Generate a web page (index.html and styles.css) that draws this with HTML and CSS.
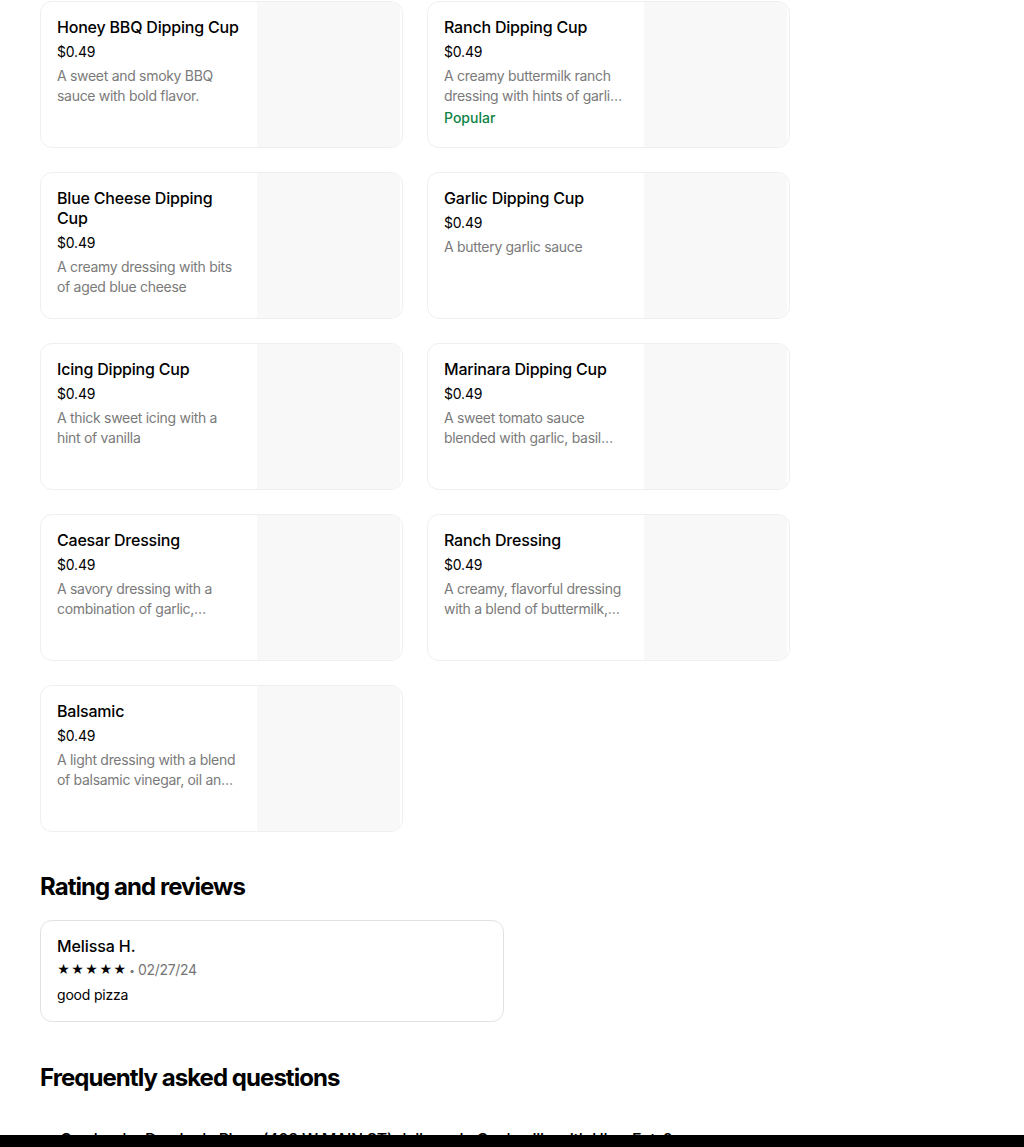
FILE: index.html
```html
<!DOCTYPE html>
<html>
<head>
<meta charset="utf-8">
<link rel="stylesheet" href="styles.css">
</head>
<body>
<main class="page">
  <section class="grid">
    <div class="card"><div class="info"><div class="title">Honey BBQ Dipping Cup</div><div class="price">$0.49</div><div class="desc">A sweet and smoky BBQ sauce with bold flavor.</div></div><div class="pic"></div></div>
    <div class="card"><div class="info"><div class="title">Ranch Dipping Cup</div><div class="price">$0.49</div><div class="desc">A creamy buttermilk ranch dressing with hints of garlic and herbs.</div><div class="popular">Popular</div></div><div class="pic"></div></div>
    <div class="card"><div class="info"><div class="title">Blue Cheese Dipping Cup</div><div class="price">$0.49</div><div class="desc">A creamy dressing with bits of aged blue cheese</div></div><div class="pic"></div></div>
    <div class="card"><div class="info"><div class="title">Garlic Dipping Cup</div><div class="price">$0.49</div><div class="desc">A buttery garlic sauce</div></div><div class="pic"></div></div>
    <div class="card"><div class="info"><div class="title">Icing Dipping Cup</div><div class="price">$0.49</div><div class="desc">A thick sweet icing with a hint of vanilla</div></div><div class="pic"></div></div>
    <div class="card"><div class="info"><div class="title">Marinara Dipping Cup</div><div class="price">$0.49</div><div class="desc">A sweet tomato sauce blended with garlic, basil and oregano.</div></div><div class="pic"></div></div>
    <div class="card"><div class="info"><div class="title">Caesar Dressing</div><div class="price">$0.49</div><div class="desc">A savory dressing with a combination of garlic, parmesan and lemon.</div></div><div class="pic"></div></div>
    <div class="card"><div class="info"><div class="title">Ranch Dressing</div><div class="price">$0.49</div><div class="desc">A creamy, flavorful dressing with a blend of buttermilk, herbs and spices.</div></div><div class="pic"></div></div>
    <div class="card"><div class="info"><div class="title">Balsamic</div><div class="price">$0.49</div><div class="desc">A light dressing with a blend of balsamic vinegar, oil and herbs.</div></div><div class="pic"></div></div>
  </section>

  <h2 class="heading reviews-heading">Rating and reviews</h2>
  <div class="review">
    <div class="name">Melissa H.</div>
    <div class="meta"><span class="stars">★★★★★</span><span class="dot">•</span><span class="date">02/27/24</span></div>
    <div class="text">good pizza</div>
  </div>

  <h2 class="heading faq-heading">Frequently asked questions</h2>
  <div class="faq">
    <span class="q">Can I order Domino's Pizza (403 W MAIN ST) delivery in Cookeville with Uber Eats?</span>
    <svg class="chev" width="14" height="14" viewBox="0 0 14 14"><path d="M2 5l5 5 5-5" fill="none" stroke="#000" stroke-width="1.6"/></svg>
  </div>
</main>
<div class="bottom-bar"></div>
</body>
</html>
```

FILE: styles.css
```css
* { box-sizing: border-box; }
html, body { margin: 0; padding: 0; background: #fff; }
body {
  font-family: Inter, "Noto Sans", "Liberation Sans", sans-serif;
  color: #000;
  overflow: hidden;
  height: 1147px;
}
.page {
  padding: 1px 40px 0 40px;
  width: 1024px;
}
.grid {
  display: grid;
  grid-template-columns: 363px 363px;
  column-gap: 24px;
  row-gap: 24px;
}
.card {
  height: 147px;
  border: 1px solid #efefef;
  border-radius: 12px;
  display: flex;
  overflow: hidden;
  background: #fff;
}
.info {
  width: 216px;
  padding: 15px 16px 0 16px;
  flex: none;
}
.title {
  font-size: 16px;
  font-weight: 500;
  line-height: 20px;
  letter-spacing: -0.2px;
}
.price {
  font-size: 14px;
  line-height: 20px;
  margin-top: 5px;
  letter-spacing: -0.2px;
}
.desc {
  font-size: 14px;
  line-height: 20px;
  color: #7a7a7a;
  margin-top: 4px;
  letter-spacing: -0.3px;
  display: -webkit-box;
  -webkit-line-clamp: 2;
  -webkit-box-orient: vertical;
  overflow: hidden;
}
.popular {
  font-size: 14px;
  line-height: 20px;
  font-weight: 500;
  color: #0e8345;
  margin-top: 2px;
}
.pic {
  flex: 1;
  background: #f8f8f8;
  margin-right: 2px;
}
.heading {
  margin: 0;
  font-size: 24px;
  font-weight: 700;
  line-height: 32px;
  letter-spacing: -0.95px;
}
.reviews-heading { margin-top: 39px; }
.review {
  margin-top: 17px;
  width: 464px;
  height: 102px;
  border: 1px solid #e2e2e2;
  border-radius: 12px;
  padding: 15px 16px 0 16px;
}
.name { font-size: 16px; line-height: 20px; font-weight: 500; letter-spacing: -0.1px; }
.meta { margin-top: 4px; font-size: 14px; line-height: 20px; display: flex; align-items: center; }
.stars { font-size: 12.5px; letter-spacing: 1px; }
.dot { color: #757575; font-size: 10px; margin: 0 3px 0 2px; }
.date { color: #757575; font-size: 14px; letter-spacing: -0.3px; }
.text { margin-top: 5px; font-size: 14px; line-height: 20px; letter-spacing: -0.2px; }
.faq-heading { margin-top: 40px; }
.faq {
  margin-top: 35px;
  padding: 0 20px;
  display: flex;
  justify-content: space-between;
  align-items: center;
  width: 940px;
}
.q { font-size: 16px; line-height: 20px; font-weight: 500; letter-spacing: -0.3px; }
.bottom-bar {
  position: fixed;
  left: 0;
  right: 0;
  bottom: 0;
  height: 12px;
  background: #000;
}
```
